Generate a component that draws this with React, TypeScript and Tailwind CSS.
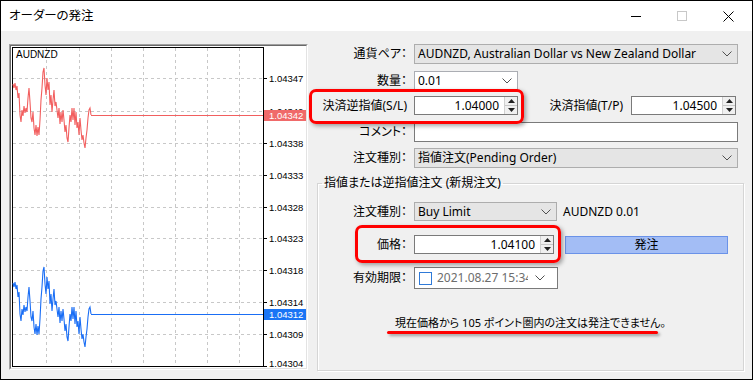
import React from 'react';

const ui = "font-['Noto_Sans','Noto_Sans_CJK_JP',sans-serif] [font-feature-settings:'palt'] text-[12px] text-black";

// red price history (1px per step), blue is the same walk shifted down
const redYs = [
  84, 88, 83, 90, 86, 98, 93, 115, 122, 110, 116, 106, 113, 108, 112, 98, 88, 102, 118, 122,
  112, 128, 135, 125, 136, 127, 135, 120, 100, 88, 72, 68, 85, 95, 78, 90, 82, 105, 95, 112,
  100, 90, 106, 102, 110, 118, 108, 124, 112, 122, 110, 120, 132, 125, 138, 142, 128, 115, 122, 108,
  120, 108, 125, 112, 128, 122, 135, 118, 130, 140, 135, 143, 148, 138, 130, 118, 110, 108, 115,
];

const gridX = [46, 79, 111, 143, 175, 207, 239];
const gridY = [
  { y: 78, label: '1.04347' },
  { y: 111, label: '1.04342' },
  { y: 143, label: '1.04338' },
  { y: 175, label: '1.04333' },
  { y: 207, label: '1.04328' },
  { y: 238, label: '1.04323' },
  { y: 270, label: '1.04318' },
  { y: 302, label: '1.04314' },
  { y: 334, label: '1.04309' },
];

const toPoints = (offset: number) =>
  redYs.map((y, i) => `${13 + i},${y + offset}`).join(' ');

const Chevron: React.FC = () => (
  <svg width="10" height="6" viewBox="0 0 10 6">
    <polyline points="0.5,0.5 5,5 9.5,0.5" fill="none" stroke="#505050" strokeWidth="1" />
  </svg>
);

const Combo: React.FC<{ text: string; className: string; editable?: boolean }> = ({ text, className, editable }) => (
  <div
    className={`flex items-center border ${
      editable ? 'bg-white border-[#abadb3]' : 'bg-[#e5e5e5] border-[#adadad]'
    } ${className}`}
  >
    <span className="flex-1 pl-[3px] leading-none whitespace-nowrap">{text}</span>
    <span className="pr-[5px] flex items-center">
      <Chevron />
    </span>
  </div>
);

const Spin: React.FC<{ value: string; className: string }> = ({ value, className }) => (
  <div className={`flex border border-[#7a7a7a] bg-white ${className}`}>
    <span className="flex-1 flex items-center justify-end pr-[5px] leading-none">{value}</span>
    <div className="w-[13px] flex flex-col bg-[#f0f0f0] border-l border-[#d0d0d0]">
      <div className="flex-1 flex items-center justify-center border-b border-[#c8c8c8]">
        <svg width="7" height="4" viewBox="0 0 7 4">
          <polygon points="3.5,0 7,4 0,4" fill="#202020" />
        </svg>
      </div>
      <div className="flex-1 flex items-center justify-center">
        <svg width="7" height="4" viewBox="0 0 7 4">
          <polygon points="0,0 7,0 3.5,4" fill="#202020" />
        </svg>
      </div>
    </div>
  </div>
);

const Label: React.FC<{ text: string; w?: string }> = ({ text, w = 'w-[97px]' }) => (
  <div className={`${w} shrink-0 text-right pr-[7px] leading-none whitespace-nowrap`}>{text}</div>
);

const Chart: React.FC = () => (
  <div className="w-[299px] h-[326px] border border-t-[#a0a0a0] border-l-[#a0a0a0] border-r-white border-b-white">
    <div className="w-full h-full border border-t-[#696969] border-l-[#696969] border-r-[#e3e3e3] border-b-[#e3e3e3] bg-white">
      <svg width="295" height="322" viewBox="11 46 295 322" className="block">
        {gridX.map(x => (
          <line key={x} x1={x + 0.5} y1={48} x2={x + 0.5} y2={367} stroke="#c8c8c8" strokeDasharray="3 3" />
        ))}
        {gridY.map(g => (
          <line key={g.y} x1={13} y1={g.y + 0.5} x2={263} y2={g.y + 0.5} stroke="#c8c8c8" strokeDasharray="3 3" />
        ))}
        <rect x={12.5} y={47.5} width={251} height={319} fill="none" stroke="#000" />
        <g fontFamily="'Liberation Sans', Arial, sans-serif" fontSize="9.5" fill="#000">
          {gridY.map(g => (
            <g key={g.y}>
              <line x1={263} y1={g.y + 0.5} x2={267} y2={g.y + 0.5} stroke="#000" />
              <text x={269} y={g.y + 4}>{g.label}</text>
            </g>
          ))}
          <line x1={263} y1={366.5} x2={267} y2={366.5} stroke="#000" />
          <text x={269} y={367}>1.04304</text>
          <text x={16} y={58} fontSize="10">AUDNZD</text>
        </g>
        <polyline points={toPoints(0)} fill="none" stroke="#f25f5f" strokeWidth="1.1" />
        <line x1={91} y1={115.5} x2={263} y2={115.5} stroke="#f25f5f" />
        <rect x={264} y={110} width={42} height={11} fill="#f06a6a" />
        <text x={269} y={119} fontFamily="'Liberation Sans', Arial, sans-serif" fontSize="9.5" fill="#fff">
          1.04342
        </text>
        <polyline points={toPoints(199)} fill="none" stroke="#1a6ef5" strokeWidth="1.1" />
        <line x1={91} y1={314.5} x2={263} y2={314.5} stroke="#1a6ef5" />
        <rect x={264} y={309} width={42} height={11} fill="#1a75f5" />
        <text x={269} y={318} fontFamily="'Liberation Sans', Arial, sans-serif" fontSize="9.5" fill="#fff">
          1.04312
        </text>
      </svg>
    </div>
  </div>
);

const App: React.FC = () => {
  return (
    <div className={`w-[755px] h-[381px] bg-white ${ui}`}>
      <div className="relative w-[753px] h-[380px] border border-black flex flex-col">
        {/* Title bar */}
        <div className="h-[30px] flex items-center bg-white">
          <span className="pl-[8px] text-[12.5px]">オーダーの発注</span>
          <div className="ml-auto flex items-center h-full">
            <div className="w-[46px] flex justify-center">
              <div className="w-[10px] h-px bg-black" />
            </div>
            <div className="w-[46px] flex justify-center">
              <div className="w-[10px] h-[10px] border border-[#c8c8c8]" />
            </div>
            <div className="w-[46px] flex justify-center mr-[1px]">
              <svg width="11" height="11" viewBox="0 0 11 11">
                <path d="M0.5 0.5 L10.5 10.5 M10.5 0.5 L0.5 10.5" stroke="#000" strokeWidth="1" />
              </svg>
            </div>
          </div>
        </div>

        {/* Body */}
        <div className="flex-1 bg-[#f0f0f0] flex">
          <div className="ml-[8px] mt-[13px]">
            <Chart />
          </div>

          <div className="ml-[9px] mt-[13px] w-[427px] flex flex-col">
            <div className="flex items-center h-[20px]">
              <Label text="通貨ペア：" />
              <Combo text="AUDNZD, Australian Dollar vs New Zealand Dollar" className="w-[324px] h-[20px]" />
            </div>
            <div className="flex items-center h-[19px] mt-[7px]">
              <Label text="数量：" />
              <Combo text="0.01" editable className="w-[104px] h-[19px]" />
            </div>
            <div className="flex items-center h-[19px] mt-[6px]">
              <Label text="決済逆指値(S/L)" />
              <Spin value="1.04000" className="w-[104px] h-[19px]" />
              <div className="flex-1 flex items-center justify-end pr-[8px]">
                <span className="leading-none mr-[8px]">決済指値(T/P)</span>
                <Spin value="1.04500" className="w-[105px] h-[19px]" />
              </div>
            </div>
            <div className="flex items-center h-[20px] mt-[7px]">
              <Label text="コメント：" />
              <div className="w-[324px] h-[20px] border border-[#7a7a7a] bg-white" />
            </div>
            <div className="flex items-center h-[20px] mt-[6px]">
              <Label text="注文種別：" />
              <Combo text="指値注文(Pending Order)" className="w-[324px] h-[20px]" />
            </div>

            <fieldset className="mt-[7px] h-[196px] border border-[#d5d5d5] shadow-[inset_1px_1px_0_#fff,1px_1px_0_#fff]">
              <legend className="ml-[4px] px-[2px] leading-[16px]">指値または逆指値注文 (新規注文)</legend>
              <div className="flex items-center h-[19px] mt-[11px]">
                <Label text="注文種別：" w="w-[96px]" />
                <Combo text="Buy Limit" className="w-[143px] h-[19px]" />
                <span className="ml-[6px] leading-none">AUDNZD 0.01</span>
              </div>
              <div className="flex items-center h-[19px] mt-[14px]">
                <Label text="価格：" w="w-[96px]" />
                <Spin value="1.04100" className="w-[140px] h-[19px]" />
                <div className="ml-[11px] w-[163px] h-[18px] flex items-center justify-center bg-[#a3bdf5] border border-[#6a92e8] leading-none">
                  発注
                </div>
              </div>
              <div className="flex items-center h-[22px] mt-[13px]">
                <Label text="有効期限：" w="w-[96px]" />
                <div className="w-[144px] h-[22px] flex items-center border border-[#7a7a7a] bg-white">
                  <div className="ml-[4px] w-[13px] h-[13px] border border-[#2f7ad8] bg-white shrink-0" />
                  <span className="ml-[5px] w-[91px] overflow-hidden whitespace-nowrap text-[#6d6d6d] leading-none">
                    2021.08.27 15:34
                  </span>
                  <span className="ml-auto pr-[12px] flex items-center">
                    <Chevron />
                  </span>
                </div>
              </div>
              <div className="mt-[26px] text-center leading-[16px] text-[11px]">
                現在価格から 105 ポイント圏内の注文は発注できません。
              </div>
            </fieldset>
          </div>
        </div>

        {/* Annotations */}
        <div className="absolute left-[308px] top-[88px] w-[215px] h-[35px] border-[3px] border-[#ff0000] rounded-[7px] shadow-[2px_2px_4px_rgba(0,0,0,0.35)]" />
        <div className="absolute left-[354px] top-[224px] w-[206px] h-[38px] border-[3px] border-[#ff0000] rounded-[7px] shadow-[2px_2px_4px_rgba(0,0,0,0.35)]" />
        <div className="absolute left-[386px] top-[330px] w-[271px] h-[3px] bg-[#ff0000] rounded-full shadow-[2px_2px_3px_rgba(0,0,0,0.35)]" />
      </div>
    </div>
  );
};

export default App;
